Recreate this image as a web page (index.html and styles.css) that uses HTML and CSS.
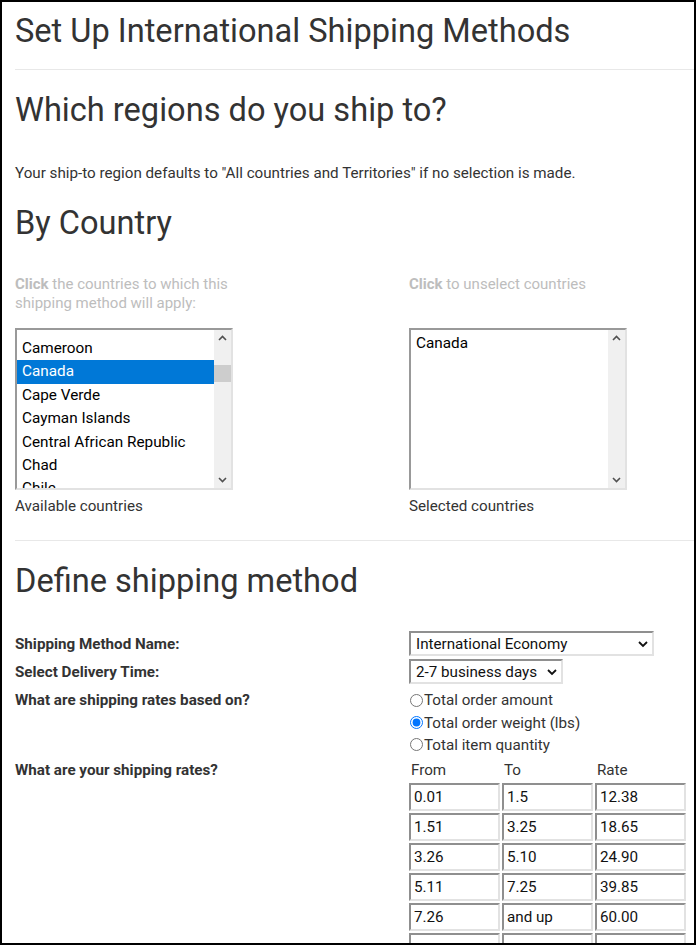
FILE: index.html
```html
<!DOCTYPE html>
<html lang="en">
<head>
    <meta charset="UTF-8">
    <meta name="viewport" content="width=device-width, initial-scale=1.0">
    <title>Set Up International Shipping Methods</title>
    <link rel="stylesheet" href="styles.css">
</head>
<body>

    <div class="page">
        <h1 class="page-title">Set Up International Shipping Methods</h1>
        <hr>

        <h2 class="section-title">Which regions do you ship to?</h2>
        <p class="intro">Your ship-to region defaults to "All countries and Territories" if no selection is made.</p>

        <h2 class="section-title by-country">By Country</h2>
        <div class="country-picker">
            <div class="picker-col">
                <div class="help"><b>Click</b> the countries to which this shipping method will apply:</div>
                <div class="listbox">
                    <ul class="list-items scrolled">
                        <li>Cameroon</li>
                        <li class="selected">Canada</li>
                        <li>Cape Verde</li>
                        <li>Cayman Islands</li>
                        <li>Central African Republic</li>
                        <li>Chad</li>
                        <li>Chile</li>
                    </ul>
                    <div class="scrollbar">
                        <svg class="arrow" width="17" height="17" viewBox="0 0 17 17"><path d="M5 10 L8.5 6.5 L12 10" fill="none" stroke="#505050" stroke-width="1.6"/></svg>
                        <div class="track"><div class="thumb"></div></div>
                        <svg class="arrow" width="17" height="17" viewBox="0 0 17 17"><path d="M5 7 L8.5 10.5 L12 7" fill="none" stroke="#505050" stroke-width="1.6"/></svg>
                    </div>
                </div>
                <div class="caption">Available countries</div>
            </div>
            <div class="picker-col">
                <div class="help"><b>Click</b> to unselect countries</div>
                <div class="listbox">
                    <ul class="list-items">
                        <li>Canada</li>
                    </ul>
                    <div class="scrollbar">
                        <svg class="arrow" width="17" height="17" viewBox="0 0 17 17"><path d="M5 10 L8.5 6.5 L12 10" fill="none" stroke="#505050" stroke-width="1.6"/></svg>
                        <div class="track"></div>
                        <svg class="arrow" width="17" height="17" viewBox="0 0 17 17"><path d="M5 7 L8.5 10.5 L12 7" fill="none" stroke="#505050" stroke-width="1.6"/></svg>
                    </div>
                </div>
                <div class="caption">Selected countries</div>
            </div>
        </div>

        <hr class="rule-2">

        <h2 class="section-title">Define shipping method</h2>

        <form class="method-form">
            <div class="form-row">
                <label class="form-label">Shipping Method Name:</label>
                <span class="select-wrap method-select">
                    <select>
                        <option>International Economy</option>
                    </select>
                    <svg class="chevron" width="12" height="8" viewBox="0 0 12 8"><path d="M2 2 L6 6 L10 2" fill="none" stroke="#111" stroke-width="1.8"/></svg>
                </span>
            </div>
            <div class="form-row">
                <label class="form-label">Select Delivery Time:</label>
                <span class="select-wrap time-select">
                    <select>
                        <option>2-7 business days</option>
                    </select>
                    <svg class="chevron" width="12" height="8" viewBox="0 0 12 8"><path d="M2 2 L6 6 L10 2" fill="none" stroke="#111" stroke-width="1.8"/></svg>
                </span>
            </div>
            <div class="form-row">
                <label class="form-label">What are shipping rates based on?</label>
                <div class="radios">
                    <label class="radio"><input type="radio" name="basis">Total order amount</label>
                    <label class="radio"><input type="radio" name="basis" checked>Total order weight (lbs)</label>
                    <label class="radio"><input type="radio" name="basis">Total item quantity</label>
                </div>
            </div>
            <div class="form-row rates-row">
                <label class="form-label">What are your shipping rates?</label>
                <div class="rates">
                    <div class="rates-head">From</div>
                    <div class="rates-head">To</div>
                    <div class="rates-head">Rate</div>

                    <input type="text" value="0.01"><input type="text" value="1.5"><input type="text" value="12.38">
                    <input type="text" value="1.51"><input type="text" value="3.25"><input type="text" value="18.65">
                    <input type="text" value="3.26"><input type="text" value="5.10"><input type="text" value="24.90">
                    <input type="text" value="5.11"><input type="text" value="7.25"><input type="text" value="39.85">
                    <input type="text" value="7.26"><input type="text" value="and up"><input type="text" value="60.00">
                    <input type="text" value=""><input type="text" value=""><input type="text" value="">
                </div>
            </div>
        </form>
    </div>

</body>
</html>
```

FILE: styles.css
```css
body {
    margin: 0;
    padding: 0;
    background-color: #fff;
    color: #333;
    font-family: Roboto, "Liberation Sans", sans-serif;
}

.page {
    box-sizing: border-box;
    width: 696px;
    height: 945px;
    border: 2px solid #000;
    padding: 12px 0 0 13px;
    overflow: hidden;
}

h1, h2, p {
    margin: 0;
    font-weight: 400;
}

.page-title {
    font-size: 32.6px;
    line-height: 34px;
    color: #333;
}

hr {
    border: 0;
    border-top: 1px solid #e8e8e8;
    margin: 21px 0 0 0;
    width: 680px;
}

.section-title {
    font-size: 32.6px;
    line-height: 36px;
    color: #333;
    margin-top: 22px;
}

.intro {
    font-size: 15.2px;
    line-height: 20px;
    margin-top: 35px;
}

.by-country {
    margin-top: 22px;
}

/* country picker */

.country-picker {
    display: grid;
    grid-template-columns: 394px 1fr;
    margin-top: 34px;
}

.help {
    width: 218px;
    height: 38px;
    font-size: 15px;
    line-height: 19px;
    color: #bdbdbd;
    margin-bottom: 15px;
}

.listbox {
    box-sizing: border-box;
    width: 218px;
    height: 162px;
    border: 2px solid;
    border-color: #999 #e2e2e2 #e2e2e2 #999;
    display: flex;
    overflow: hidden;
    background: #fff;
}

.list-items {
    list-style: none;
    margin: 0;
    padding: 2px 0 0 0;
    flex: 1;
    overflow: hidden;
    font-size: 15.3px;
    color: #000;
}

.list-items.scrolled {
    padding-top: 7px;
}

.list-items li {
    height: 23.4px;
    line-height: 23.4px;
    padding-left: 5px;
    white-space: nowrap;
}

.list-items li.selected {
    background: #0078d7;
    color: #fff;
}

.scrollbar {
    width: 17px;
    background: #f0f0f0;
    display: flex;
    flex-direction: column;
}

.scrollbar .arrow {
    display: block;
    flex: none;
}

.scrollbar .track {
    flex: 1;
}

.thumb {
    height: 17px;
    margin-top: 18px;
    background: #cdcdcd;
}

.caption {
    font-size: 15.2px;
    line-height: 20px;
    margin-top: 6px;
}

.rule-2 {
    margin-top: 24px;
}

/* method form */

.method-form {
    margin-top: 32px;
}

.form-row {
    display: grid;
    grid-template-columns: 394px 1fr;
    align-items: start;
    margin-bottom: 3px;
}

.form-label {
    font-size: 15.2px;
    font-weight: 700;
    line-height: 23px;
    padding-top: 2px;
    color: #333;
}

.select-wrap {
    position: relative;
    display: inline-block;
    justify-self: start;
}

.select-wrap select {
    -webkit-appearance: none;
    appearance: none;
    display: block;
    box-sizing: border-box;
    height: 25px;
    border: 2px solid;
    border-color: #8f8f8f #e2e2e2 #e2e2e2 #8f8f8f;
    border-radius: 0;
    background: #fff;
    font-family: Roboto, "Liberation Sans", sans-serif;
    font-size: 15.2px;
    color: #111;
    padding: 0 0 0 5px;
    margin: 0;
}

.method-select select {
    width: 245px;
}

.time-select select {
    width: 154px;
}

.chevron {
    position: absolute;
    top: 9px;
    right: 5px;
    pointer-events: none;
}

.radios {
    display: flex;
    flex-direction: column;
    margin-top: 2px;
    margin-bottom: -2px;
}

.radio {
    display: flex;
    align-items: center;
    height: 22.4px;
    font-size: 15.2px;
    color: #333;
}

.radio input {
    width: 13px;
    height: 13px;
    margin: 0 1px 0 1px;
}

.rates-row .form-label {
    line-height: 24px;
    padding-top: 1px;
}

.rates {
    display: grid;
    grid-template-columns: 91px 91px 91px;
    column-gap: 2px;
    row-gap: 2px;
}

.rates-head {
    font-size: 15.2px;
    line-height: 22px;
    padding: 2px 0 0 2px;
    color: #333;
}

.rates input {
    box-sizing: border-box;
    width: 91px;
    height: 28px;
    border: 2px solid;
    border-color: #8f8f8f #e2e2e2 #e2e2e2 #8f8f8f;
    padding: 0 3px;
    margin: 0;
    font-family: Roboto, "Liberation Sans", sans-serif;
    font-size: 15.2px;
    color: #111;
}
```
